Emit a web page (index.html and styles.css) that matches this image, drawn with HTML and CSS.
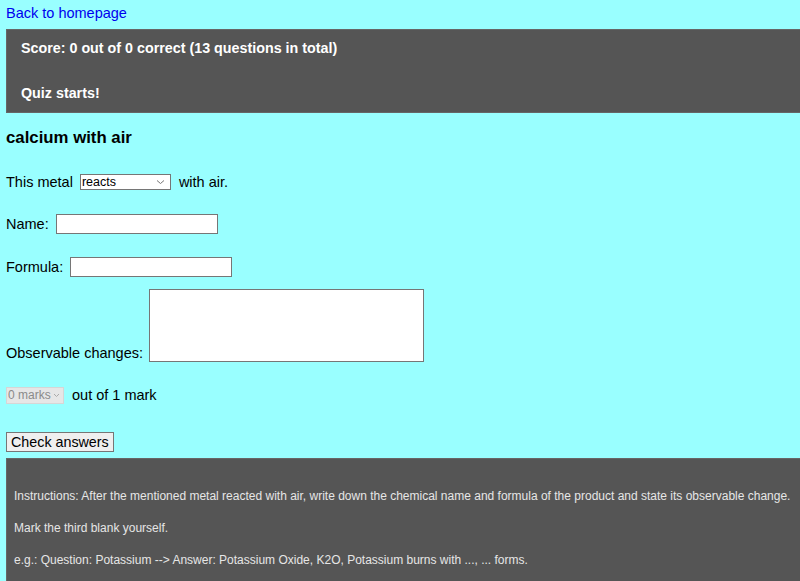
FILE: index.html
```html
<!DOCTYPE html>
<html>
<head>
<meta charset="utf-8">
<link rel="stylesheet" href="styles.css">
</head>
<body>
<a class="home" href="#">Back to homepage</a>
<div class="panel score">
  <p>Score: 0 out of 0 correct (13 questions in total)</p>
  <p>Quiz starts!</p>
</div>
<h3 class="title">calcium with air</h3>
<div class="row first">This metal<select class="sel react"><option>reacts</option></select>with air.</div>
<div class="row">Name:<input class="txt" type="text"></div>
<div class="row">Formula:<input class="txt" type="text"></div>
<div class="row obs">Observable changes:<textarea class="area"></textarea></div>
<div class="row markrow"><select class="sel marks" disabled><option>0 marks</option></select>out of 1 mark</div>
<div class="row btnrow"><button class="check">Check answers</button></div>
<div class="panel info">
  <p>Instructions: After the mentioned metal reacted with air, write down the chemical name and formula of the product and state its observable change.</p>
  <p>Mark the third blank yourself.</p>
  <p>e.g.: Question: Potassium --&gt; Answer: Potassium Oxide, K2O, Potassium burns with ..., ... forms.</p>
</div>
</body>
</html>
```
FILE: styles.css
```css
html, body {
  margin: 0;
  background: #99ffff;
}
body {
  padding: 4px 0 0 6px;
  font-family: "Liberation Sans", Arial, sans-serif;
  font-size: 14.5px;
  color: #000;
  overflow: hidden;
}
.home {
  display: block;
  color: #0000ee;
  text-decoration: none;
  line-height: 18px;
}
.panel {
  background: #555555;
  color: #fff;
  border: 1px solid #666;
  border-right: none;
}
.score {
  margin-top: 7px;
  padding: 10px 15px 10px 14px;
  height: 62px;
  display: flex;
  flex-direction: column;
  justify-content: space-between;
  font-weight: bold;
  font-size: 14.3px;
}
.score p { margin: 0; line-height: 17px; }
.title {
  margin: 15px 0 0 0;
  font-size: 16.8px;
  line-height: 19px;
}
.row {
  display: flex;
  align-items: center;
  margin-top: 23px;
  line-height: 18px;
}
.row.first { margin-top: 26px; }
.sel {
  appearance: none;
  -webkit-appearance: none;
  font-family: "Liberation Sans", Arial, sans-serif;
  font-size: 12.5px;
  line-height: 14px;
  padding: 0 0 0 1px;
  border-radius: 0;
  background-repeat: no-repeat;
  box-sizing: border-box;
}
.react {
  margin: 0 8px 0 7px;
  width: 91px;
  height: 16px;
  color: #000;
  border: 1px solid #767676;
  background-color: #fff;
  background-image: url("data:image/svg+xml;utf8,<svg xmlns='http://www.w3.org/2000/svg' width='9' height='6'><path d='M1 1.5 L4.5 4.5 L8 1.5' fill='none' stroke='%23777' stroke-width='1'/></svg>");
  background-position: right 5px center;
}
.txt {
  margin-left: 7px;
  width: 158px;
  height: 16px;
  padding: 1px;
  border: 1px solid #767676;
  box-sizing: content-box;
}
.obs { align-items: flex-end; margin-top: 12px; }
.area {
  margin-left: 6px;
  width: 273px;
  height: 71px;
  padding: 0;
  border: 1px solid #767676;
  resize: none;
  display: block;
}
.markrow { margin-top: 24px; }
.marks {
  margin-right: 8px;
  width: 58px;
  height: 17px;
  font-size: 12px;
  padding: 0 10px 0 1px;
  color: #8a8a8a;
  background-color: #e6e6e6;
  border: 1px solid #d6d6d6;
  opacity: 1;
  background-image: url("data:image/svg+xml;utf8,<svg xmlns='http://www.w3.org/2000/svg' width='7' height='5'><path d='M1 1 L3.5 3.5 L6 1' fill='none' stroke='%23aaa' stroke-width='1'/></svg>");
  background-position: right 3px center;
}
.check {
  font-family: "Liberation Sans", Arial, sans-serif;
  font-size: 14.3px;
  padding: 0 4px;
  height: 20px;
  line-height: 18px;
  border: 1px solid #767676;
  background: #efefef;
  color: #000;
}
.btnrow { margin-top: 28px; }
.info {
  margin-top: 6px;
  padding: 30px 0 10px 7px;
  font-size: 12px;
  color: #e6e6e6;
  height: 130px;
}
.info p {
  margin: 0 0 17px 0;
  line-height: 15px;
}
```
